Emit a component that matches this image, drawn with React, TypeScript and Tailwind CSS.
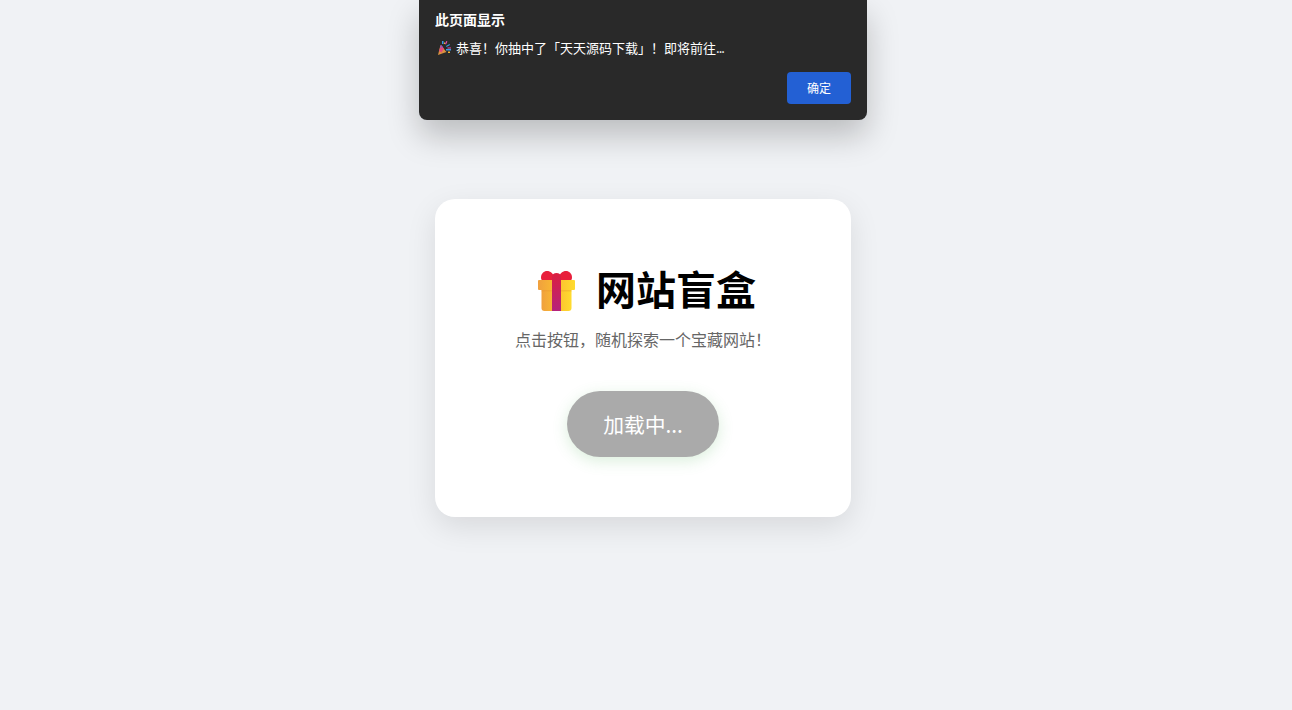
function GiftIcon() {
  return (
    <svg className="mt-[6px]" width="37" height="40" viewBox="0 0 37 40" fill="none">
      <defs>
        <linearGradient id="box" x1="0" y1="0" x2="1" y2="0">
          <stop offset="0" stopColor="#f0a03e" />
          <stop offset="0.5" stopColor="#fbbd30" />
          <stop offset="1" stopColor="#ffdc2e" />
        </linearGradient>
        <linearGradient id="ribbon" x1="0" y1="0" x2="0" y2="1">
          <stop offset="0" stopColor="#dc1f3f" />
          <stop offset="1" stopColor="#b5237c" />
        </linearGradient>
      </defs>
      <path d="M3 6.500C3 2.500 6 0 9 0c3.500 0 6 2.500 8 7v3H6C4 10 3 8.500 3 6.500z" fill="#e8203c" />
      <path d="M34 6.500C34 2.500 31 0 28 0c-3.500 0-6 2.500-8 7v3h11c2 0 3-1.500 3-3.500z" fill="#e8203c" />
      <path d="M3.500 15h30v22a3 3 0 0 1-3 3h-24a3 3 0 0 1-3-3z" fill="url(#box)" />
      <rect x="0" y="9" width="37" height="10" rx="1" fill="url(#box)" />
      <path d="M3.500 19h30v1.500h-30z" fill="#e8962e" opacity="0.35" />
      <path d="M14 6c0-2.500 2-4 4.500-4S23 3.500 23 6v34h-9z" fill="url(#ribbon)" />
    </svg>
  )
}

function PartyIcon() {
  return (
    <svg width="14" height="15" viewBox="0 0 14 15" fill="none">
      <path d="M1 14l2.500-10 6 7z" fill="#d9913f" />
      <path d="M2 10l2-6 3 3.500-2.500 4z" fill="#e0487a" />
      <path d="M3 7l1-3 2 2z" fill="#8a55c8" />
      <path d="M5 3V0h1.500v3zM9 5l3.500-2 .5 1-3.500 2zM9 8h5v1.400H9z" fill="#3a9be0" />
      <path d="M8 3l1.200-3 1.200.5L9 3.500zM10.500 6.500H14v1h-3.500z" fill="#ea4fb2" />
      <path d="M11 10.500h2v1.500h-2zM7 1.500h1V3H7z" fill="#f2b233" />
    </svg>
  )
}

export default function App() {
  return (
    <div
      className="relative min-h-screen bg-[#f0f2f5] flex items-center justify-center pr-[6px] pt-[6px]"
      style={{ fontFamily: '"Noto Sans CJK SC", "Noto Sans", sans-serif' }}
    >
      <div className="w-[416px] h-[318px] bg-white rounded-[20px] shadow-[0_10px_30px_rgba(0,0,0,0.1)] flex flex-col items-center pt-[61px]">
        <h1 className="flex items-center h-[56px] pl-[8px] text-[40px] leading-[56px] font-bold text-black">
          <GiftIcon />
          <span className="ml-[21px]">网站盲盒</span>
        </h1>
        <p className="mt-[11px] text-base leading-[24px] text-[#666666]">点击按钮，随机探索一个宝藏网站！</p>
        <button className="mt-[40px] w-[152px] h-[66px] pt-[2px] rounded-full bg-[#aaaaaa] text-white text-[20.8px] shadow-[0_4px_15px_rgba(76,175,80,0.2)]">
          加载中...
        </button>
      </div>

      {/* browser alert on top of the page */}
      <div className="absolute top-0 left-[419px] w-[448px] h-[120px] bg-[#292929] rounded-b-[8px] shadow-[0_16px_32px_rgba(0,0,0,0.22)] px-[16px] text-white">
        <div className="pt-[10px] text-[14px] leading-[18px] font-bold">此页面显示</div>
        <div className="mt-[11px] flex items-center h-[18px] text-[13px] leading-[18px] font-normal">
          <span className="ml-[2px] mr-[5px]">
            <PartyIcon />
          </span>
          <span>
            恭喜！你抽中了「天天源码下载」！即将前往<span className="tracking-[-1px]">...</span>
          </span>
        </div>
        <div className="mt-[15px] flex justify-end">
          <button className="w-[64px] h-[32px] rounded-[4px] bg-[#2360d4] text-white text-[12px]">确定</button>
        </div>
      </div>
    </div>
  )
}
